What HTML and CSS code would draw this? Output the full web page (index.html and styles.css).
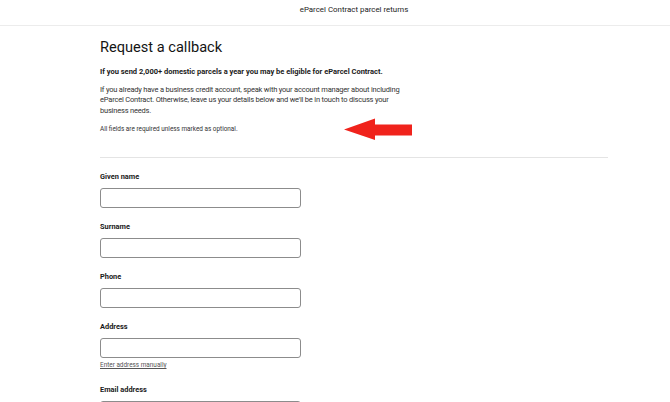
FILE: index.html
```html
<!DOCTYPE html>
<html lang="en">
<head>
<meta charset="utf-8">
<title>Request a callback</title>
<link rel="stylesheet" href="styles.css">
</head>
<body>
<header class="topbar">
  <div class="topbar-title">eParcel Contract parcel returns</div>
</header>
<main class="page">
  <h1 class="title">Request a callback</h1>
  <p class="lead">If you send 2,000+ domestic parcels a year you may be eligible for eParcel Contract.</p>
  <p class="body">If you already have a business credit account, speak with your account manager about including eParcel Contract. Otherwise, leave us your details below and we'll be in touch to discuss your business needs.</p>
  <p class="note">All fields are required unless marked as optional.</p>
  <svg class="arrow" viewBox="0 0 68 22" width="68" height="22" aria-hidden="true">
    <polygon points="0,11.5 31,0.5 31,6.5 68,6.5 68,17.5 31,17.5 31,22" fill="#f0231c"/>
  </svg>
  <hr class="divider">
  <form class="form">
    <div class="field">
      <label class="label" for="given">Given name</label>
      <input class="input" id="given" type="text">
    </div>
    <div class="field">
      <label class="label" for="surname">Surname</label>
      <input class="input" id="surname" type="text">
    </div>
    <div class="field">
      <label class="label" for="phone">Phone</label>
      <input class="input" id="phone" type="text">
    </div>
    <div class="field">
      <label class="label" for="address">Address</label>
      <input class="input" id="address" type="text">
      <a class="manual" href="#">Enter address manually</a>
    </div>
    <div class="field">
      <label class="label" for="email">Email address</label>
      <input class="input" id="email" type="text">
    </div>
  </form>
</main>
</body>
</html>
```
FILE: styles.css
```css
* { box-sizing: border-box; }
html, body { margin: 0; padding: 0; background: #fff; }
body {
  font-family: Roboto, "Liberation Sans", Arial, sans-serif;
  color: #1f1f1f;
  width: 670px;
  height: 402px;
  overflow: hidden;
}
.topbar {
  height: 26px;
  border-bottom: 1px solid #ececec;
  padding-left: 38px;
  text-align: center;
}
.topbar-title {
  font-size: 7.9px;
  line-height: 20px;
  color: #222;
}
.page {
  position: relative;
  padding: 12px 0 0 100px;
  width: 608px;
}
.title {
  margin: 0;
  font-size: 14.6px;
  line-height: 18px;
  font-weight: 400;
  color: #141414;
}
.lead {
  margin: 11px 0 0;
  font-size: 7.5px;
  line-height: 10px;
  font-weight: 700;
  color: #1a1a1a;
}
.body {
  margin: 7.7px 0 0;
  width: 316px;
  font-size: 7.5px;
  letter-spacing: -0.2px;
  line-height: 10.5px;
  color: #333;
}
.note {
  margin: 7.7px 0 0;
  font-size: 6.4px;
  line-height: 10px;
  color: #333;
}
.arrow {
  position: absolute;
  left: 344px;
  top: 92px;
}
.divider {
  margin: 23px 0 0;
  border: 0;
  height: 1px;
  background: #e4e4e4;
}
.form {
  display: flex;
  flex-direction: column;
  gap: 14px;
  padding-top: 14px;
}
.field {
  display: flex;
  flex-direction: column;
  align-items: flex-start;
}
.label {
  font-size: 7.4px;
  line-height: 10px;
  font-weight: 700;
  color: #1a1a1a;
}
.input {
  margin-top: 6px;
  width: 201px;
  height: 20px;
  border: 1px solid #8c8c8c;
  border-radius: 3px;
  background: #fff;
  padding: 0 6px;
  font: inherit;
}
.manual {
  margin-top: 3px;
  font-size: 6.4px;
  line-height: 8px;
  color: #555;
  text-decoration: underline;
  margin-bottom: 2px;
}
```
